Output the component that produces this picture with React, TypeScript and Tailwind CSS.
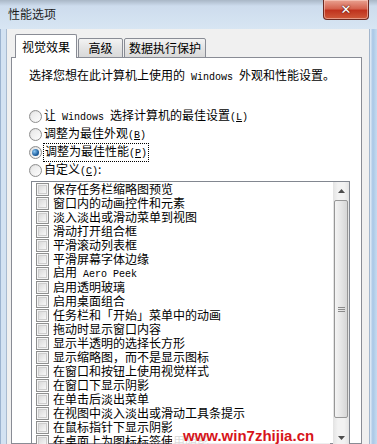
import React from "react";

const CJK = '"Noto Sans CJK SC", "Noto Sans", sans-serif';
const MONO = '"Liberation Mono", "DejaVu Sans Mono", monospace';

function M({ children, spaced }: { children: React.ReactNode; spaced?: boolean }) {
  return (
    <span className={spaced ? "text-[10px] mx-[6px]" : "text-[10px]"} style={{ fontFamily: MONO }}>
      {children}
    </span>
  );
}

function Acc({ k }: { k: string }) {
  return (
    <span className="text-[10px]" style={{ fontFamily: MONO }}>
      (<span className="underline">{k}</span>)
    </span>
  );
}

function Radio({ checked }: { checked?: boolean }) {
  return (
    <div className="w-[13px] h-[13px] rounded-full border border-[#8f8f8f] bg-[linear-gradient(135deg,#d8d8d8,#ffffff)] flex items-center justify-center shrink-0">
      <div className="w-[9px] h-[9px] rounded-full bg-[linear-gradient(135deg,#e8e8e8,#fbfbfb)] flex items-center justify-center">
        {checked && (
          <div className="w-[7px] h-[7px] rounded-full bg-[radial-gradient(circle_at_35%_35%,#8cc8f5,#1f5f9e_60%,#0d3f75)]" />
        )}
      </div>
    </div>
  );
}

function Check() {
  return (
    <div className="w-[13px] h-[13px] border border-[#8e8f8f] bg-[#f4f4f4] flex items-center justify-center shrink-0">
      <div className="w-[9px] h-[9px] border border-[#cdcdcd] bg-[linear-gradient(135deg,#dadada,#f7f7f7)]" />
    </div>
  );
}

const items: React.ReactNode[] = [
  "保存任务栏缩略图预览",
  "窗口内的动画控件和元素",
  "淡入淡出或滑动菜单到视图",
  "滑动打开组合框",
  "平滑滚动列表框",
  "平滑屏幕字体边缘",
  <>
    启用<M spaced>Aero Peek</M>
  </>,
  "启用透明玻璃",
  "启用桌面组合",
  "任务栏和「开始」菜单中的动画",
  "拖动时显示窗口内容",
  "显示半透明的选择长方形",
  "显示缩略图，而不是显示图标",
  "在窗口和按钮上使用视觉样式",
  "在窗口下显示阴影",
  "在单击后淡出菜单",
  "在视图中淡入淡出或滑动工具条提示",
  "在鼠标指针下显示阴影",
  "在桌面上为图标标签使用阴影",
];

export default function App() {
  return (
    <div
      className="relative w-[377px] h-[444px] overflow-hidden bg-[linear-gradient(to_bottom,#a9b7c6_0px,#cddced_6px,#d8e6f3_30px,#c9dcef_100%)] text-black flex flex-col [text-autospace:no-autospace]"
      style={{ fontFamily: CJK }}
    >
      {/* Title bar */}
      <div className="h-[29px] flex shrink-0">
        <div className="pl-[8px] pt-[6px] text-[12px] leading-[16px] text-[#1e1e1e]">性能选项</div>
        <div className="flex-1" />
        <div className="mr-[8px] w-[46px] h-[20px] rounded-b-[4px] border border-t-0 border-[#6b2a22] bg-[linear-gradient(to_bottom,#e9a291_0%,#d5634f_45%,#c0331e_55%,#cf5a3a_100%)] flex items-center justify-center shadow-[inset_0_0_0_1px_rgba(255,220,210,0.5)]">
          <span
            className="text-white font-bold text-[13px] leading-[13px]"
            style={{ fontFamily: '"DejaVu Sans", sans-serif', textShadow: "0 0 2px #5a1a10, 0 0 1px #5a1a10" }}
          >
            ✕
          </span>
        </div>
      </div>

      {/* Body */}
      <div className="flex flex-1 min-h-0">
        <div className="w-[6px] shrink-0 border-l border-[#9cb3cf] bg-[#d3e2f2]" />
        <div className="flex-1 bg-[#f0f0f0] pl-[4px] pr-[7px] pt-[5px] flex flex-col min-h-0 border-l border-[#a9bbd0]">
          {/* Tabs */}
          <div className="flex items-end h-[24px] pl-[4px] -mb-px relative z-10 text-[12px]">
            <div className="w-[62px] h-[24px] bg-white border border-b-0 border-[#898c95] rounded-t-[2px] flex items-center justify-center leading-[16px]">
              视觉效果
            </div>
            <div className="ml-[1px] w-[45px] h-[20px] border border-[#898c95] rounded-t-[2px] bg-[linear-gradient(to_bottom,#f3f3f3,#e4e4e4_50%,#d9d9d9)] flex items-center justify-center leading-[16px]">
              高级
            </div>
            <div className="ml-[1px] w-[82px] h-[20px] border border-[#898c95] rounded-t-[2px] bg-[linear-gradient(to_bottom,#f3f3f3,#e4e4e4_50%,#d9d9d9)] flex items-center justify-center leading-[16px]">
              数据执行保护
            </div>
          </div>

          {/* Panel */}
          <div className="flex-1 bg-white border border-[#898c95] pl-[17px] pt-[9px] flex flex-col min-h-0">
            <div className="text-[12px] leading-[16px] whitespace-nowrap">
              选择您想在此计算机上使用的<M spaced>Windows</M>外观和性能设置。
            </div>

            <div className="mt-[21px] flex flex-col text-[12px]">
              <div className="h-[18px] flex items-center gap-[2px]">
                <Radio />
                <span className="leading-[16px] whitespace-nowrap">
                  让<M spaced>Windows</M>选择计算机的最佳设置<Acc k="L" />
                </span>
              </div>
              <div className="h-[18px] flex items-center gap-[2px]">
                <Radio />
                <span className="leading-[16px]">
                  调整为最佳外观<Acc k="B" />
                </span>
              </div>
              <div className="h-[18px] flex items-center gap-[1px]">
                <Radio checked />
                <span className="leading-[14px] border border-dotted border-black px-[1px]">
                  调整为最佳性能<Acc k="P" />
                </span>
              </div>
              <div className="h-[18px] flex items-center gap-[2px]">
                <Radio />
                <span className="leading-[16px]">
                  自定义<Acc k="C" />:
                </span>
              </div>
            </div>

            {/* List box */}
            <div className="mt-[2px] ml-[2px] w-[319px] h-[300px] border border-[#828790] flex shrink-0">
              <div className="flex-1 flex flex-col pl-[4px] text-[12px]">
                {items.map((it, i) => (
                  <div key={i} className="h-[14px] flex items-center gap-[4px] shrink-0">
                    <Check />
                    <span className="leading-[14px] whitespace-nowrap">{it}</span>
                  </div>
                ))}
              </div>
              <div className="w-[16px] shrink-0 flex flex-col bg-[linear-gradient(to_right,#e3e3e3,#f2f2f2_30%,#f2f2f2_70%,#e3e3e3)]">
                <div className="h-[17px] flex items-center justify-center">
                  <svg width="7" height="4" viewBox="0 0 7 4">
                    <path d="M0 4 L3.5 0 L7 4 Z" fill="#4d4d4d" />
                  </svg>
                </div>
                <div className="mt-[1px] h-[218px] mx-[1px] rounded-[2px] border border-[#979797] bg-[linear-gradient(to_right,#f4f4f4,#e6e6e6_50%,#d6d6d6)] flex items-center justify-center">
                  <div className="flex flex-col gap-[1px]">
                    <div className="w-[7px] h-[1px] bg-[#8a8a8a]" />
                    <div className="w-[7px] h-[1px] bg-[#8a8a8a]" />
                    <div className="w-[7px] h-[1px] bg-[#8a8a8a]" />
                  </div>
                </div>
                <div className="h-[11px]" />
                <div className="h-[17px] flex items-center justify-center">
                  <svg width="7" height="4" viewBox="0 0 7 4">
                    <path d="M0 0 L3.5 4 L7 0 Z" fill="#4d4d4d" />
                  </svg>
                </div>
              </div>
            </div>
          </div>
        </div>
        <div className="w-[8px] shrink-0 border-l border-[#a3b6cc] bg-[linear-gradient(to_right,#e6eef7,#a9c7e6_40%,#c6dbef)]" />
      </div>

      {/* Watermark */}
      <div
        className="absolute left-[172px] top-[425px] w-[158px] h-[19px] bg-white/85 pl-[11px] pt-[2px] text-[15px] font-bold leading-[18px] text-[#d7141a]"
        style={{ fontFamily: '"Liberation Sans", Arial, sans-serif' }}
      >
        www.win7zhijia.cn
      </div>
    </div>
  );
}
